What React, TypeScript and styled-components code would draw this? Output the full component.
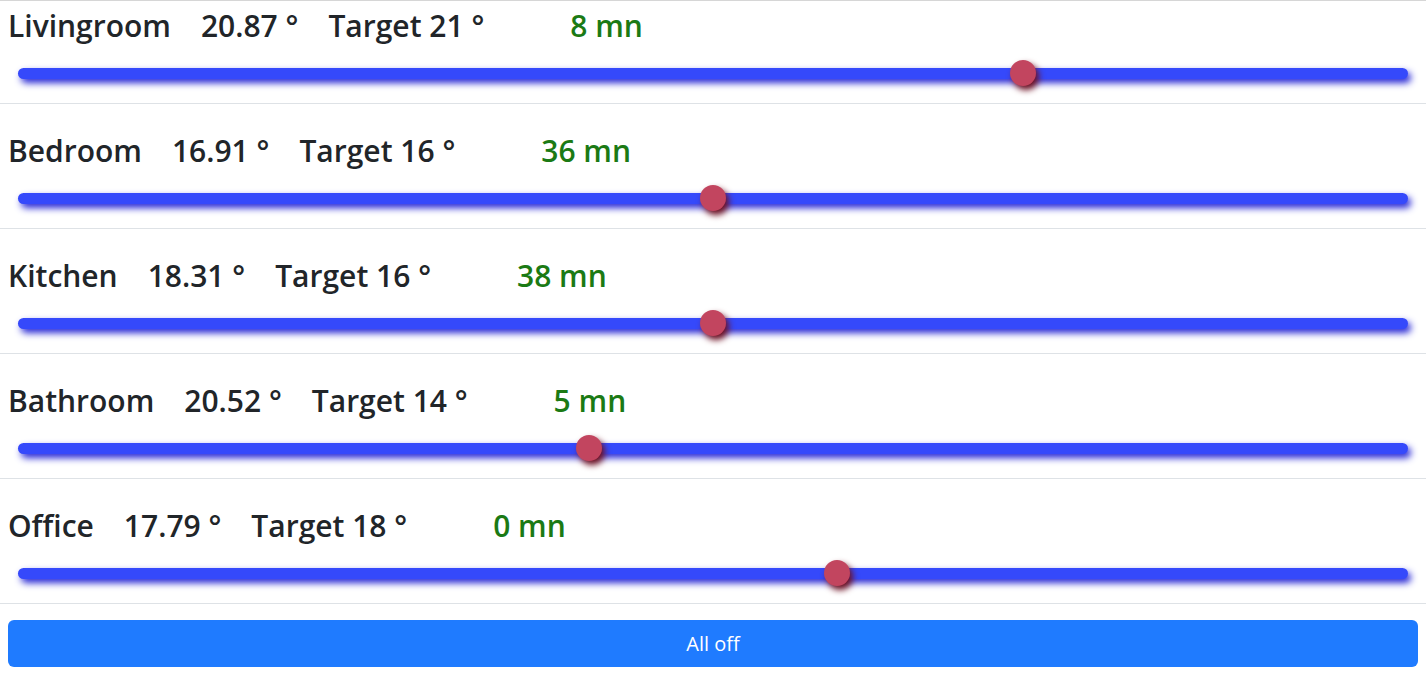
import React from "react";
import styled, { createGlobalStyle } from "styled-components";

const MIN = 5;
const MAX = 27;

type Room = {
  name: string;
  temp: string;
  target: number;
  minutes: number;
};

const rooms: Room[] = [
  { name: "Livingroom", temp: "20.87", target: 21, minutes: 8 },
  { name: "Bedroom", temp: "16.91", target: 16, minutes: 36 },
  { name: "Kitchen", temp: "18.31", target: 16, minutes: 38 },
  { name: "Bathroom", temp: "20.52", target: 14, minutes: 5 },
  { name: "Office", temp: "17.79", target: 18, minutes: 0 },
];

export default function App() {
  return (
    <>
      <GlobalStyle />
      <Page>
        <RoomList>
          {rooms.map((room, i) => (
            <RoomRow key={room.name} $first={i === 0}>
              <Heading>
                <span>{room.name}</span>
                <span>{room.temp} °</span>
                <span>Target {room.target} °</span>
                <Timer>{room.minutes} mn</Timer>
              </Heading>
              <SliderWrap>
                <Slider
                  type="range"
                  min={MIN}
                  max={MAX}
                  step={1}
                  defaultValue={room.target}
                />
              </SliderWrap>
            </RoomRow>
          ))}
        </RoomList>
        <OffButton type="button">All off</OffButton>
      </Page>
    </>
  );
}

const GlobalStyle = createGlobalStyle`
  html, body {
    margin: 0;
    padding: 0;
    background: #ffffff;
  }
  body {
    font-family: "Open Sans", "Noto Sans", "Liberation Sans", sans-serif;
    color: #212529;
  }
`;

const Page = styled.div`
  display: flex;
  flex-direction: column;
  padding: 0 8px 27px;
`;

const RoomList = styled.div`
  display: flex;
  flex-direction: column;
  border-top: 1px solid #d6d6d6;
  margin: 0 -8px;
`;

const RoomRow = styled.div<{ $first?: boolean }>`
  display: flex;
  flex-direction: column;
  padding: ${(p) => (p.$first ? "6px" : "28px")} 8px 17px;
  border-bottom: 1px solid #dee2e6;
`;

const Heading = styled.h2`
  display: flex;
  align-items: center;
  gap: 30px;
  margin: 0;
  font-size: 30px;
  font-weight: 600;
  line-height: 38px;
  color: #212529;
`;

const Timer = styled.span`
  margin-left: 56px;
  color: #1b7a14;
`;

const SliderWrap = styled.div`
  display: flex;
  margin-top: 15px;
  padding: 0 10px;
`;

const Slider = styled.input`
  -webkit-appearance: none;
  appearance: none;
  width: 100%;
  height: 26px;
  margin: 0;
  background: transparent;
  outline: none;

  &::-webkit-slider-runnable-track {
    height: 11px;
    border-radius: 6px;
    background: #3549fb;
    box-shadow: 3px 4px 7px #2a2ad6;
  }

  &::-webkit-slider-thumb {
    -webkit-appearance: none;
    appearance: none;
    width: 26px;
    height: 26px;
    margin-top: -7.5px;
    border-radius: 50%;
    border: none;
    background: #c2455f;
    box-shadow: 3px 4px 6px #6e1120;
    cursor: pointer;
  }
`;

const OffButton = styled.button`
  margin-top: 16px;
  height: 47px;
  border: none;
  border-radius: 6px;
  background: #1f7bff;
  color: #ffffff;
  font-family: "Open Sans", "Noto Sans", sans-serif;
  font-size: 20px;
  cursor: pointer;
`;
